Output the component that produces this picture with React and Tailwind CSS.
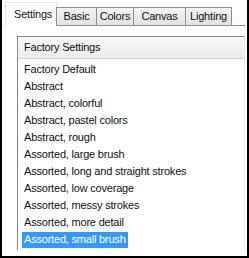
import React from "react";

const tabs = [
  { label: "Basic", w: "w-[41px]" },
  { label: "Colors", w: "w-[38px]" },
  { label: "Canvas", w: "w-[53px]" },
  { label: "Lighting", w: "w-[47px]" },
];

const presets = [
  "Factory Default",
  "Abstract",
  "Abstract, colorful",
  "Abstract, pastel colors",
  "Abstract, rough",
  "Assorted, large brush",
  "Assorted, long and straight strokes",
  "Assorted, low coverage",
  "Assorted, messy strokes",
  "Assorted, more detail",
  "Assorted, small brush",
];

export default function App() {
  const selected = "Assorted, small brush";

  return (
    <div
      className="w-[249px] h-[258px] bg-white border-l-2 border-r-2 border-b-2 border-black overflow-hidden text-[11px] tracking-[-0.2px] text-[#111]"
      style={{ fontFamily: '"Liberation Sans", Arial, sans-serif' }}
    >
      <div className="flex items-end pt-[2px] pl-[3px] h-[26px]">
        <div className="w-[52px] h-[24px] bg-white border-l border-t border-r border-[#e6e6e6] flex items-center pl-[8px]">
          Settings
        </div>
        {tabs.map((t) => (
          <div
            key={t.label}
            className={`${t.w} h-[19px] -ml-px border border-[#8c8f97] bg-gradient-to-b from-[#f3f3f3] to-[#e2e2e2] flex items-center justify-center`}
          >
            {t.label}
          </div>
        ))}
        <div className="flex-1 h-px bg-[#8c8f97] mr-[2px]"></div>
      </div>

      <div className="pl-[15px] pt-[10px]">
        <div className="w-[228px] h-[214px] border-l border-t border-r border-[#828790] border-r-[#e8e8e8]">
          <div className="h-[22px] bg-gradient-to-b from-[#f7f7f7] to-[#ececec] border-b border-[#d0d0d0] flex items-center pl-[6px]">
            Factory Settings
          </div>
          <div className="pt-[2px]">
            {presets.map((p) => (
              <div key={p} className="h-[17px] flex items-center pl-[4px]">
                <span
                  className={
                    p === selected
                      ? "h-[16px] flex items-center px-[2px] bg-[#3399ff] text-white"
                      : "px-[2px]"
                  }
                >
                  {p}
                </span>
              </div>
            ))}
          </div>
        </div>
      </div>
    </div>
  );
}
